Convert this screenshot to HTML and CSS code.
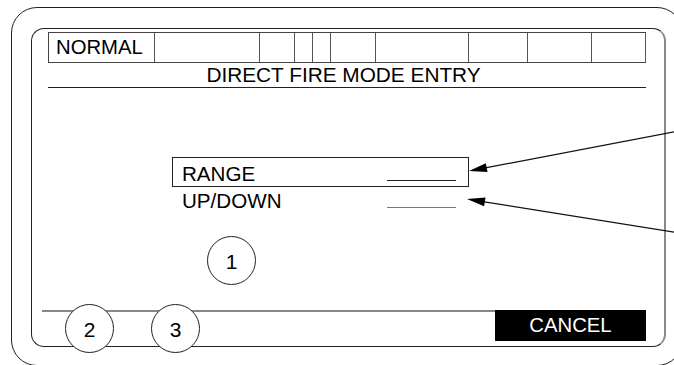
FILE: index.html
```html
<!DOCTYPE html>
<html lang="en">
<head>
    <meta charset="UTF-8">
    <meta name="viewport" content="width=device-width, initial-scale=1.0">
    <title>Direct Fire Mode Entry</title>
    <link rel="stylesheet" href="styles.css">
</head>
<body>

<div class="device">
    <div class="screen">
        <div class="status-bar">
            <div class="cell">NORMAL</div>
            <div class="cell"></div>
            <div class="cell"></div>
            <div class="cell"></div>
            <div class="cell"></div>
            <div class="cell"></div>
            <div class="cell"></div>
            <div class="cell"></div>
            <div class="cell"></div>
            <div class="cell"></div>
        </div>

        <div class="title">DIRECT FIRE MODE ENTRY</div>

        <div class="fields">
            <div class="field selected">
                <span class="label">RANGE</span>
                <span class="blank"></span>
            </div>
            <div class="field second">
                <span class="label">UP/DOWN</span>
                <span class="blank"></span>
            </div>
        </div>

        <div class="softkeys">
            <div class="softkey-rule"></div>
            <div class="softkey">CANCEL</div>
        </div>
    </div>
</div>

<!-- callouts drawn over the screen -->
<span class="callout callout-1">1</span>
<span class="callout callout-2">2</span>
<span class="callout callout-3">3</span>

<svg class="arrows" width="674" height="365" viewBox="0 0 674 365">
    <line x1="676" y1="131.5" x2="480" y2="168.9" />
    <polygon points="469,171 487.5,172 485.8,163.2" />
    <line x1="676" y1="232.5" x2="478" y2="200.8" />
    <polygon points="467,199 484.1,206.3 485.5,197.4" />
</svg>

</body>
</html>
```

FILE: styles.css
```css
html, body {
    overflow: hidden;
}

body {
    margin: 0;
    position: relative;
    width: 674px;
    height: 365px;
    background: #fff;
    color: #000;
    font-family: "Liberation Sans", Arial, sans-serif;
}

/* outer case, runs off the right and bottom edges */
.device {
    box-sizing: border-box;
    width: 672px;
    height: 359px;
    margin: 7px 0 0 11px;
    padding: 20px 0 0 19px;
    border: 1px solid #222;
    border-radius: 26px;
}

.screen {
    box-sizing: border-box;
    width: 635px;
    height: 319px;
    border: 1px solid #222;
    border-right: 2px solid #888;
    border-radius: 13px;
    display: flex;
    flex-direction: column;
}

.status-bar {
    box-sizing: border-box;
    width: 598px;
    height: 31px;
    margin: 3px 0 0 16px;
    border: 1px solid #444;
    border-right: none;
    display: grid;
    grid-template-columns: 106px 105px 35px 18px 18px 45px 93px 59px 64px 54px;
}

.cell {
    box-sizing: border-box;
    border-right: 1px solid #555;
    padding-left: 7px;
    font-size: 20.3px;
    line-height: 29px;
}

.title {
    width: 591px;
    margin-left: 16px;
    padding-right: 7px;
    height: 24px;
    border-bottom: 1px solid #222;
    text-align: center;
    font-size: 20.8px;
    line-height: 24px;
}

.fields {
    width: 297px;
    margin: 69px 0 0 140px;
}

.field {
    box-sizing: border-box;
    display: flex;
    align-items: baseline;
    padding: 4px 12px 0 9px;
    border: 1px solid transparent;
    font-size: 20.6px;
    line-height: 24px;
}

.field.selected {
    border-color: #222;
}

.field.second {
    border-top: none;
    border-bottom: none;
    padding-top: 2px;
}

.label {
    flex: 1;
}

.blank {
    display: inline-block;
    width: 69px;
    border-bottom: 1px solid #222;
    margin-bottom: 2px;
}

.field.second .blank {
    border-bottom-color: #777;
}

.softkeys {
    display: flex;
    align-items: flex-start;
    margin: auto 18px 5px 10px;
}

.softkey-rule {
    flex: 1;
    border-top: 2px solid #888;
}

.softkey {
    width: 151px;
    height: 31px;
    background: #000;
    color: #fff;
    text-align: center;
    font-size: 20.3px;
    line-height: 31px;
}

.callout {
    position: absolute;
    box-sizing: border-box;
    width: 49px;
    height: 49px;
    padding-top: 2px;
    border: 1px solid #222;
    border-radius: 50%;
    background: #fff;
    text-align: center;
    font-size: 21px;
    line-height: 45px;
}

.callout-1 { left: 207px; top: 236px; }
.callout-2 { left: 65px; top: 304px; }
.callout-3 { left: 151px; top: 304px; }

.arrows {
    position: absolute;
    left: 0;
    top: 0;
    pointer-events: none;
}

.arrows line {
    stroke: #111;
    stroke-width: 1.2;
}

.arrows polygon {
    fill: #000;
}
```
